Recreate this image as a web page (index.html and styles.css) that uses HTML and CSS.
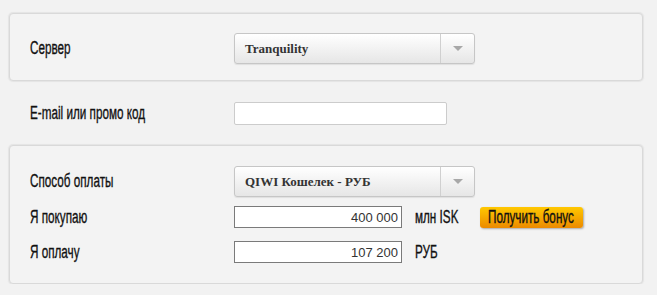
FILE: index.html
```html
<!DOCTYPE html>
<html lang="ru">
<head>
    <meta charset="UTF-8">
    <title>Покупка ISK</title>
    <link rel="stylesheet" href="styles.css">
</head>
<body>
    <form class="order" action="#" method="POST">
        <div class="panel panel-server">
            <div class="row row-select">
                <label class="label"><span class="cond">Сервер</span></label>
                <div class="select">
                    <span class="select-text">Tranquility</span>
                    <span class="select-arrow"></span>
                </div>
            </div>
        </div>

        <div class="row row-email">
            <label class="label" for="email"><span class="cond">E-mail или промо код</span></label>
            <input class="field field-email" type="text" id="email">
        </div>

        <div class="panel panel-pay">
            <div class="row row-select">
                <label class="label"><span class="cond">Способ оплаты</span></label>
                <div class="select">
                    <span class="select-text">QIWI Кошелек - РУБ</span>
                    <span class="select-arrow"></span>
                </div>
            </div>
            <div class="row row-buy">
                <label class="label" for="buy"><span class="cond">Я покупаю</span></label>
                <input class="field field-num" type="text" id="buy" value="400 000">
                <span class="unit"><span class="cond">млн ISK</span></span>
                <button class="bonus" type="button"><span class="cond">Получить бонус</span></button>
            </div>
            <div class="row row-payed">
                <label class="label" for="pay"><span class="cond">Я оплачу</span></label>
                <input class="field field-num" type="text" id="pay" value="107 200">
                <span class="unit"><span class="cond">РУБ</span></span>
            </div>
        </div>
    </form>
</body>
</html>
```

FILE: styles.css
```css
body {
    margin: 0;
    padding: 0;
    background-color: #f2f2f2;
    color: #111;
    font-family: "Liberation Sans", Arial, sans-serif;
}
.order {
    padding: 13px 0 0 9px;
    width: 634px;
}
.panel {
    background-color: #f3f3f3;
    border: 1px solid #d9d9d9;
    border-radius: 4px;
    box-shadow: 0 0 1px 1px #e4e4e4;
}
.panel-server {
    padding: 19px 20px 16px;
}
.panel-pay {
    padding: 20px 20px 20px;
    margin-top: 20px;
}
.row {
    display: flex;
    align-items: center;
}
/* narrow headline face */
.cond {
    display: inline-block;
    white-space: nowrap;
    transform: scaleX(0.65);
    transform-origin: 0 50%;
    -webkit-text-stroke: 0.35px currentColor;
}
.label {
    width: 204px;
    font-size: 18px;
}
.row-select {
    height: 31px;
}
.row-email {
    height: 23px;
    margin-top: 21px;
    padding-left: 21px;
}
.row-buy {
    height: 22px;
    margin-top: 9px;
}
.row-payed {
    height: 22px;
    margin-top: 13px;
}

.select {
    width: 241px;
    height: 31px;
    box-sizing: border-box;
    border: 1px solid #c6c6c6;
    border-radius: 3px;
    background: linear-gradient(#ffffff, #e6e6e6);
    box-shadow: 0 1px 1px rgba(0, 0, 0, 0.08);
    display: flex;
    align-items: center;
}
.select-text {
    flex: 1;
    padding-left: 10px;
    font-family: "Liberation Serif", serif;
    font-weight: bold;
    font-size: 13px;
    color: #333;
}
.select-arrow {
    width: 33px;
    height: 100%;
    border-left: 1px solid #d0d0d0;
    display: flex;
    align-items: center;
    justify-content: center;
}
.select-arrow::after {
    content: "";
    border-left: 5px solid transparent;
    border-right: 5px solid transparent;
    border-top: 5px solid #a8a8a8;
}

.field {
    box-sizing: border-box;
    margin: 0;
    font-family: "Liberation Sans", Arial, sans-serif;
    font-size: 13px;
    color: #333;
    background: #fff;
}
.field-email {
    width: 213px;
    height: 23px;
    border: 1px solid #cccccc;
    border-radius: 2px;
}
.field-num {
    width: 168px;
    height: 22px;
    border: 1px solid #7a7a7a;
    text-align: right;
    padding: 0 3px;
}
.unit {
    width: 78px;
    padding-left: 13px;
    box-sizing: border-box;
    font-size: 18px;
}
.bonus {
    width: 103px;
    height: 21px;
    padding: 0 0 0 8px;
    border: none;
    border-radius: 3px;
    background: linear-gradient(#ffc800, #ec8a00);
    box-shadow: 1px 1px 2px rgba(0, 0, 0, 0.3);
    font-family: inherit;
    font-size: 18px;
    color: #111;
    text-align: left;
    overflow: hidden;
    cursor: pointer;
}
```
